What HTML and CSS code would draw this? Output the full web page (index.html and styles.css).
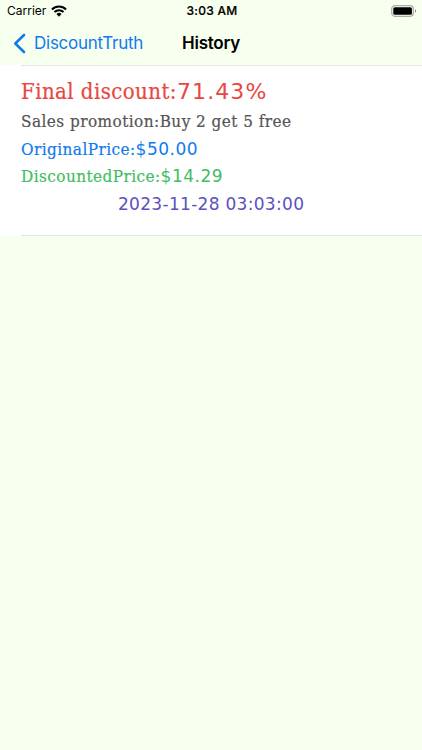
FILE: index.html
```html
<!DOCTYPE html>
<html lang="en">
<head>
    <meta charset="UTF-8">
    <meta name="viewport" content="width=device-width, initial-scale=1.0">
    <title>History</title>
    <link rel="stylesheet" href="styles.css">
</head>
<body>
    <!-- STATUS BAR -->
    <div class="status-bar">
        <div class="carrier">
            <span>Carrier</span>
            <svg class="wifi" viewBox="0 0 17 12">
                <path d="M1 4.4a10.6 10.6 0 0 1 15 0M3.7 7.1a6.8 6.8 0 0 1 9.6 0" fill="none" stroke="#000" stroke-width="2.1"/>
                <path d="M5.8 9.2a3.8 3.8 0 0 1 5.4 0L8.5 12z"/>
            </svg>
        </div>
        <div class="time">3:03 AM</div>
        <svg class="battery" viewBox="0 0 26 12">
            <rect x="0.7" y="0.7" width="21.6" height="10.6" rx="3.2" fill="none" stroke="#a9aea5" stroke-width="1.3"/>
            <rect x="2.3" y="2.3" width="18.6" height="7.4" rx="1.5"/>
            <path d="M24 4.2v3.6c1.5-.6 1.5-3 0-3.6z" fill="#858981"/>
        </svg>
    </div>

    <!-- NAVIGATION BAR -->
    <div class="nav-bar">
        <a class="back">
            <svg class="chevron" viewBox="0 0 13 21">
                <path d="M11 2L2.3 10.5 11 19" fill="none" stroke="currentColor" stroke-width="2.6" stroke-linecap="round" stroke-linejoin="round"/>
            </svg>
            <span>DiscountTruth</span>
        </a>
        <h1>History</h1>
    </div>

    <!-- HISTORY LIST -->
    <div class="record">
        <p class="final"><span>Final discount:</span><span class="num">71.43%</span></p>
        <p class="promotion"><span>Sales promotion:Buy 2 get 5 free</span></p>
        <p class="original"><span>OriginalPrice:</span><span class="num">$50.00</span></p>
        <p class="discounted"><span>DiscountedPrice:</span><span class="num">$14.29</span></p>
        <p class="date"><span class="num">2023-11-28 03:03:00</span></p>
    </div>
</body>
</html>
```
FILE: styles.css
```css
:root {
    --bg-color: #f7ffee;
    --line-color: #e5e6e3;
    --blue: #107bec;
}

* { box-sizing: border-box; margin: 0; padding: 0; }

body {
    font-family: Inter, "Liberation Sans", sans-serif;
    background-color: var(--bg-color);
    height: 100vh;
    overflow: hidden;
}

.status-bar {
    display: grid;
    grid-template-columns: 1fr auto 1fr;
    align-items: center;
    height: 21px;
    padding: 0 5px 0 7px;
    font-size: 12px;
}

.carrier { display: flex; align-items: center; gap: 5px; }
.wifi { width: 16px; height: 12px; }
.time { font-weight: 500; letter-spacing: 0.3px; -webkit-text-stroke: 0.2px; }
.battery { width: 26px; height: 12px; justify-self: end; }

.nav-bar {
    display: grid;
    grid-template-columns: 1fr auto 1fr;
    align-items: center;
    height: 44px;
    padding: 0 13px;
}

.back {
    display: flex;
    align-items: center;
    gap: 8px;
    color: var(--blue);
    font-size: 17px;
    letter-spacing: -0.25px;
}

.chevron { width: 13px; height: 21px; }

h1 { font-size: 17px; font-weight: 600; letter-spacing: -0.25px; }

.record {
    height: 171px;
    padding: 12px 0 0 21px;
    background: linear-gradient(var(--line-color), var(--line-color)) 21px 0 / 100% 1px no-repeat,
                linear-gradient(var(--line-color), var(--line-color)) 21px 100% / 100% 1px no-repeat,
                #fff;
    font-family: "DejaVu Serif Condensed", "DejaVu Serif", serif;
    font-stretch: condensed;
    font-size: 17px;
    line-height: 27.5px;
    letter-spacing: 0.43px;
    white-space: nowrap;
    -webkit-text-stroke: 0.2px;
}

.num {
    font-family: "DejaVu Sans", sans-serif;
    font-stretch: normal;
    letter-spacing: 0.5px;
    -webkit-text-stroke: 0;
}

.final { color: #e8473f; font-size: 22px; line-height: 30px; margin-bottom: 1px; }
.final .num { letter-spacing: 1.1px; }
.promotion { color: #555; letter-spacing: 0.45px; }
.original { color: var(--blue); }
.discounted { color: #43bd5f; }
.date { color: #5b52bd; padding-left: 97px; }
.date .num { letter-spacing: 0.3px; }
```
